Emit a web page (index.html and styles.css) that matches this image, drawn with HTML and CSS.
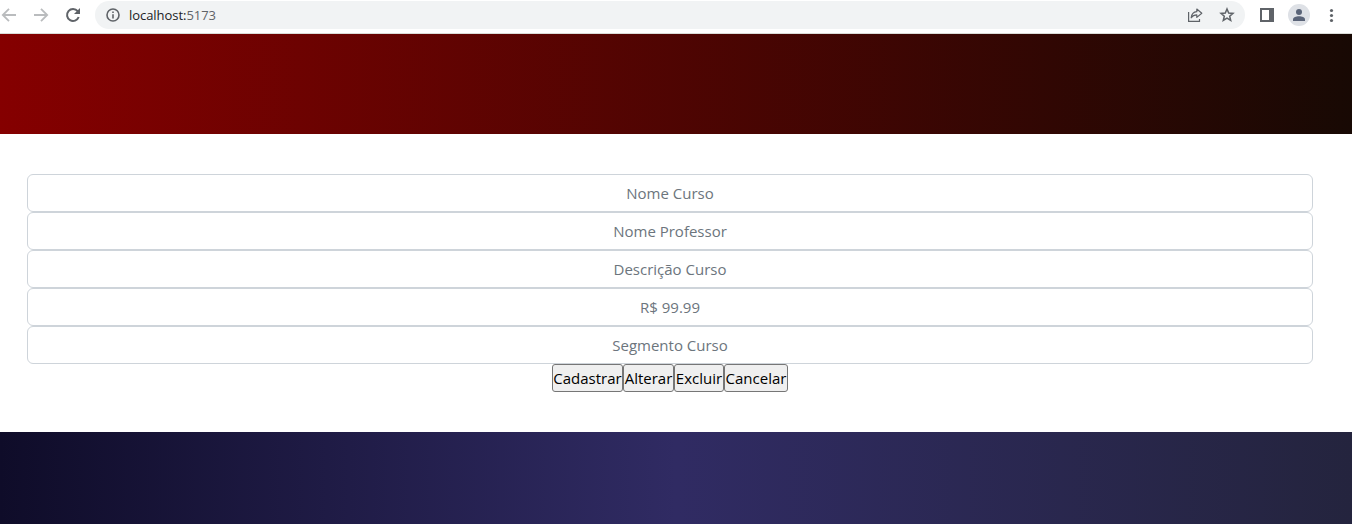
FILE: index.html
```html
<!DOCTYPE html>
<html lang="pt-BR">
<head>
<meta charset="utf-8">
<title>Cursos</title>
<link rel="stylesheet" href="styles.css">
</head>
<body>
<div class="toolbar">
  <svg class="nav-icons" width="95" height="33" viewBox="0 0 95 33" fill="none" stroke-width="1.8">
    <path d="M16 15H3M9 8.8L2.8 15L9 21.2" stroke="#babcbe"/>
    <path d="M34 15H47M41 8.8L47.200 15L41 21.200" stroke="#babcbe"/>
    <path d="M77.700 11.200A6 6 0 1 0 78.700 17" stroke="#5f6368" stroke-width="2"/>
    <path d="M80 8V14H74Z" fill="#5f6368"/>
  </svg>
  <div class="address">
    <svg width="14" height="14" viewBox="0 0 14 14" fill="none" stroke="#5f6368" stroke-width="1.6"><circle cx="7" cy="7" r="6"/><path d="M7 6.200V10.400M7 3.500V5"/></svg>
    <span class="url">localhost:<span class="port">5173</span></span>
    <svg class="share" width="16" height="16" viewBox="0 0 16 16" fill="none" stroke="#5f6368" stroke-width="1.200"><path d="M1.600 5V14.400H12.500V12"/><path d="M4.200 10.800C4.600 7 6.500 5 9.800 4.700V2L14.800 6.200L9.800 10.400V7.800C7.200 7.800 5.500 8.700 4.200 10.800Z" stroke-linejoin="round"/></svg>
    <svg class="star" width="16" height="16" viewBox="0 0 16 16" fill="none" stroke="#5f6368" stroke-width="1.500"><path d="M8 2L9.700 6L14 6.400L10.700 9.200L11.700 13.500L8 11.200L4.300 13.500L5.300 9.200L2 6.400L6.300 6Z"/></svg>
  </div>
  <svg class="tools" width="107" height="33" viewBox="0 0 107 33">
    <path d="M15 8H29V22H15ZM17 10V20H24V10Z" fill="#5f6368" fill-rule="evenodd"/>
    <circle cx="54" cy="15" r="11" fill="#dee1e6"/>
    <circle cx="54" cy="12" r="3" fill="#5a6478"/>
    <path d="M48 21V19.500C48 17.300 51 16.200 54 16.200S60 17.300 60 19.500V21Z" fill="#5a6478"/>
    <g fill="#5f6368"><circle cx="86.500" cy="10.500" r="1.600"/><circle cx="86.500" cy="15.500" r="1.600"/><circle cx="86.500" cy="20.500" r="1.600"/></g>
  </svg>
</div>
<header class="banner"></header>
<main class="content">
  <form class="course-form">
    <input class="field" type="text" placeholder="Nome Curso">
    <input class="field" type="text" placeholder="Nome Professor">
    <input class="field" type="text" placeholder="Descrição Curso">
    <input class="field" type="text" placeholder="R$ 99.99">
    <input class="field" type="text" placeholder="Segmento Curso">
    <div class="actions">
      <button class="btn register" type="button">Cadastrar</button>
      <button class="btn update" type="button">Alterar</button>
      <button class="btn remove" type="button">Excluir</button>
      <button class="btn cancel" type="button">Cancelar</button>
    </div>
  </form>
</main>
<footer class="footer"></footer>
</body>
</html>
```
FILE: styles.css
```css
* { box-sizing: border-box; }
body {
  margin: 0;
  height: 524px;
  display: flex;
  flex-direction: column;
  overflow: hidden;
  background: #fff;
  font-family: "Open Sans", sans-serif;
}
.toolbar {
  height: 34px;
  flex: none;
  display: flex;
  border-bottom: 1px solid #dadcd8;
}
.nav-icons, .tools { flex: none; }
.address {
  flex: 1;
  height: 28px;
  margin-top: 1px;
  padding: 0 10px 0 11px;
  display: flex;
  align-items: center;
  border-radius: 14px;
  background: #f1f3f4;
}
.url {
  margin-left: 9px;
  font-size: 13px;
  letter-spacing: -0.05px;
  color: #202124;
}
.port { color: #5f6368; }
.share { margin-left: auto; }
.star { margin-left: 16px; }
.banner {
  height: 100px;
  flex: none;
  background: linear-gradient(90deg, #850000, #180904);
}
.content {
  height: 298px;
  flex: none;
  padding: 40px 39px 40px 27px;
}
.course-form { display: flex; flex-direction: column; }
.field {
  width: 100%;
  height: 38px;
  padding: 6px 12px;
  border: 1px solid #ced4da;
  border-radius: 6px;
  background: #fff;
  font: 15px/24px "Open Sans", sans-serif;
  text-align: center;
}
.field::placeholder { color: #6c757d; opacity: 1; }
.actions { display: flex; justify-content: center; }
.btn {
  height: 28px;
  padding: 0;
  border: 1px solid #767676;
  border-radius: 3px;
  background: #efefef;
  color: #000;
  font: 15px/24px "Open Sans", sans-serif;
  white-space: nowrap;
}
.register { width: 71px; }
.update { width: 51px; }
.remove { width: 50px; }
.cancel { width: 64px; }
.footer {
  flex: 1;
  background: linear-gradient(90deg, #0f0c29, #302b63, #24243e);
}
```
